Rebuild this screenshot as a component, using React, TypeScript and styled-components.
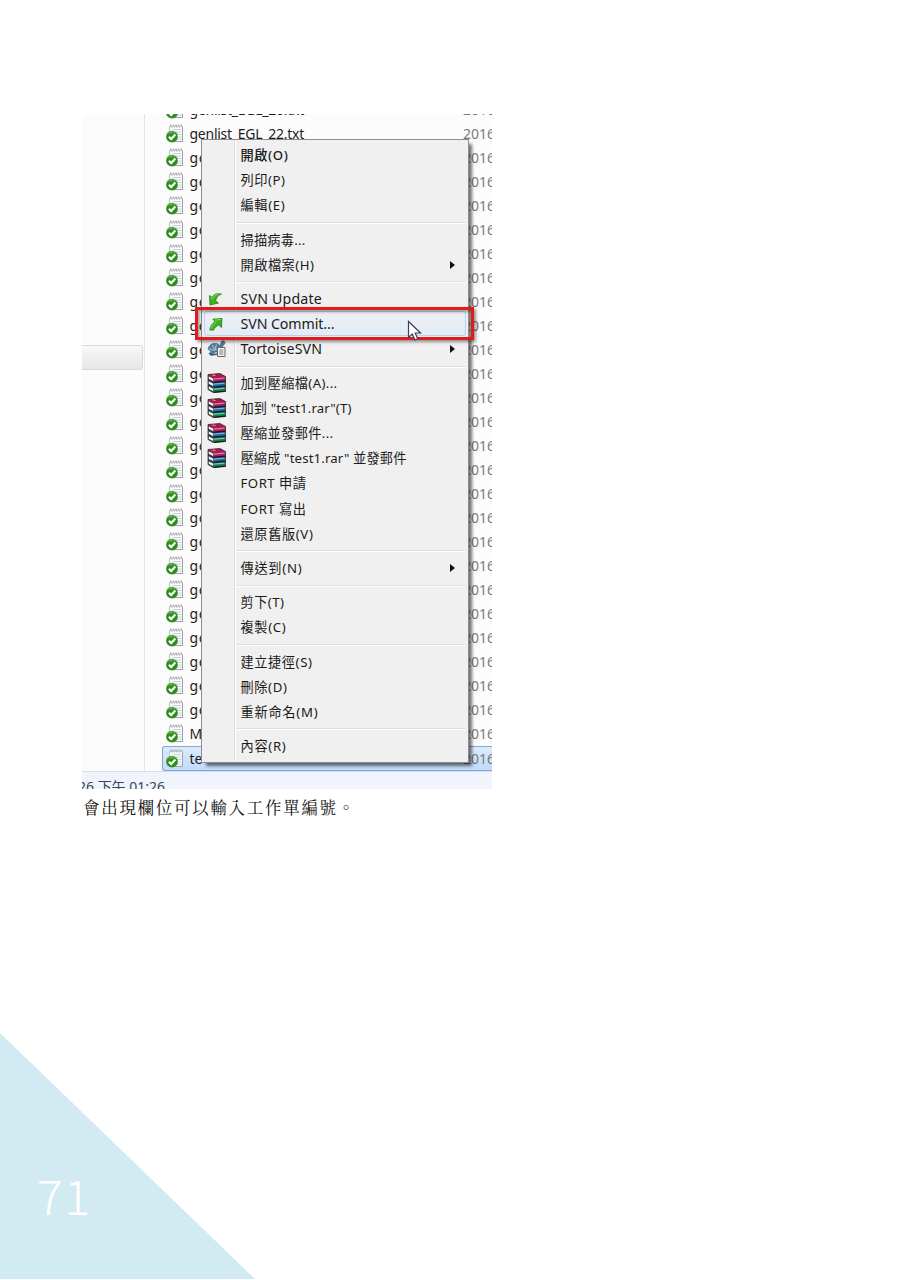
import React, { useLayoutEffect, useRef, useState } from 'react';
import styled, { createGlobalStyle, css } from 'styled-components';

const Global = createGlobalStyle`
  *, *::before, *::after { box-sizing: border-box; }
  body { margin: 0; background: #fff; }
`;

const uiFont = `"Noto Sans", "Noto Sans CJK TC", sans-serif`;

const Page = styled.main`
  width: 906px;
  height: 1280px;
  padding-top: 114px;
  display: flex;
  flex-direction: column;
  background: #fff;
  overflow: hidden;
  font-family: ${uiFont};
`;

const Figure = styled.section`
  position: relative;
  width: 410px;
  height: 675px;
  margin-left: 82px;
  flex: none;
  display: flex;
  flex-direction: column;
  overflow: hidden;
  background: #fcfcfd;
`;

const Explorer = styled.div`
  height: 657px;
  flex: none;
  display: flex;
  overflow: hidden;
`;

const Sidebar = styled.div`
  width: 63px;
  flex: none;
  padding-top: 231px;
  border-right: 1px solid #dde5f2;
`;

const SidebarItem = styled.div`
  width: 61px;
  height: 25px;
  border: 1px solid #dadada;
  border-left: 0;
  border-radius: 0 3px 3px 0;
  background: linear-gradient(#f8f8f8, #e6e6e6);
`;

const Files = styled.div`
  flex: 1;
  margin-top: -16px;
  padding-left: 17px;
`;

const FileRow = styled.div<{ $selected?: boolean }>`
  height: 24px;
  display: flex;
  align-items: center;
  padding-left: 3px;
  white-space: nowrap;
  font-size: 14px;
  line-height: 22px;
  color: #1c1c1c;
  ${(p) =>
    p.$selected &&
    css`
      height: 25px;
      padding-left: 2px;
      border: 1px solid #84a6cf;
      border-right: 0;
      border-radius: 3px 0 0 3px;
      background: linear-gradient(#dcebfc, #c1dbfc);
    `}
`;

const FileName = styled.span`
  width: 279px;
  flex: none;
  padding-left: 5.5px;
`;

const FileDate = styled.span`
  color: #7b7b7b;
`;

const StatusBar = styled.div`
  height: 18px;
  flex: none;
  border-top: 1px solid #d3dcec;
  background: #f1f4fc;
  overflow: hidden;
  padding-top: 5px;
  font-size: 14px;
  line-height: 20px;
  color: #35475f;
  white-space: nowrap;
`;

const StatusText = styled.div`
  margin-left: -4px;
`;

const Menu = styled.div`
  position: absolute;
  left: 119px;
  top: 25px;
  width: 268px;
  height: 624px;
  padding: 2.6px 2px 0;
  border: 1px solid #8d8d8d;
  background: linear-gradient(90deg, #f0f0f0 32px, #dedede 32px, #dedede 33px, #fff 33px, #fff 34px, #f0f0f0 34px);
  box-shadow: 4px 4px 3px -1px rgba(0, 0, 0, 0.55);
`;

const MenuItem = styled.div<{ $bold?: boolean; $hover?: boolean; $latin?: boolean }>`
  height: 25.05px;
  display: flex;
  align-items: center;
  font-size: ${(p) => (p.$latin ? 14.2 : 13.2)}px;
  line-height: 20px;
  font-weight: ${(p) => (p.$bold ? 500 : 400)};
  color: #1b1b1b;
  ${(p) =>
    p.$hover &&
    css`
      border-radius: 3px;
      box-shadow: inset 0 0 0 1px #b5d2f1;
      background: linear-gradient(#eef1f6, #e3ebf5);
    `}
`;

const IconSlot = styled.span`
  width: 36.5px;
  flex: none;
  display: flex;
  align-items: center;
  padding-left: 2.5px;
`;

const Label = styled.span`
  white-space: nowrap;
`;

const Arrow = styled.span`
  margin-left: auto;
  margin-right: 11px;
  border: 4px solid transparent;
  border-left: 5px solid #111;
  border-right: 0;
`;

const Separator = styled.div`
  height: 9.28px;
  display: flex;
  align-items: center;
  padding-top: 1px;
  &::after {
    content: '';
    flex: 1;
    height: 2px;
    margin-left: 32px;
    border-top: 1px solid #dfdfdf;
    border-bottom: 1px solid #fff;
  }
`;

const Highlight = styled.div`
  position: absolute;
  left: 113px;
  top: 193px;
  width: 279px;
  height: 33px;
  border: 3px solid #e01b1e;
  box-shadow: 2px 2px 3px rgba(0, 0, 0, 0.4), inset 2px 2px 3px rgba(0, 0, 0, 0.35);
`;

const Pointer = styled.svg`
  position: absolute;
  left: 325px;
  top: 206px;
`;

const Caption = styled.p`
  margin: 8px 0 0 83px;
  font-family: "Noto Serif CJK TC", "Noto Sans CJK TC", serif;
  font-size: 16.5px;
  line-height: 20px;
  color: #111;
`;

const Corner = styled.footer`
  width: 255px;
  height: 246px;
  margin-top: auto;
  margin-bottom: 1px;
  flex: none;
  padding: 126px 0 0 37px;
  background: #d2eaf1;
  clip-path: polygon(0 0, 100% 100%, 0 100%);
  font-family: "Noto Sans CJK TC", sans-serif;
  font-weight: 300;
  font-size: 48px;
  letter-spacing: 1.5px;
  line-height: 70px;
  color: #fff;
`;

/* Tracks the text so that it spans the given number of pixels. */
function Fit({ width, children }: { width: number; children: string }) {
  const ref = useRef<HTMLSpanElement>(null);
  const [spacing, setSpacing] = useState(0);
  useLayoutEffect(() => {
    const el = ref.current;
    if (el) setSpacing((width - el.getBoundingClientRect().width) / children.length);
  }, [width, children]);
  return (
    <Label ref={ref} style={{ letterSpacing: spacing }}>
      {children}
    </Label>
  );
}

const FileIcon = () => (
  <svg width="19" height="22" viewBox="0 0 19 22">
    <path d="M4.500 3h13v15.500h-13z" fill="#f9fafb" stroke="#c3c6c9" />
    <path d="M17.500 4v14.500h-9" fill="none" stroke="#9da0a4" />
    <path d="M5 4.500l1-3 1 3 1.500-3 1 3 1.500-3 1 3 1.500-3 1 3 1.500-3 1 3" fill="none" stroke="#b4b4b4" strokeWidth=".8" />
    <path d="M8 6.500h8M11 9h5M12.500 11.500h4M13.500 14h3M12.500 16.200h4" stroke="#c6d3df" />
    <circle cx="7" cy="13.700" r="5.900" fill="#2f911c" />
    <path d="M2.300 10.500a5.500 5.500 0 0 1 9-.5c-3 .3-6 .6-9 .5z" fill="#5bb044" />
    <path d="M3.900 13.700l2.300 2.300 4.200-4.500" fill="none" stroke="#fff" strokeWidth="2.100" />
  </svg>
);

const UpdateIcon = () => (
  <svg width="18" height="18" viewBox="0 0 18 18">
    <path d="M2.500 5.500l2.500 2C7 4.200 10 2.800 14.500 4.200 11.500 4.800 9.500 7 8.600 10.700l2.900 2.300-8.500 2z" fill="#39b51b" stroke="#247a13" strokeWidth=".8" />
    <path d="M3.700 7.300l1.700 1.500C7 6 9 4.700 11.500 4.400" fill="none" stroke="#86e06a" />
  </svg>
);

const CommitIcon = () => (
  <svg width="18" height="18" viewBox="0 0 18 18">
    <path d="M5.800 4.200l9.200-.7-.6 9-2.700-2.400c-2.400 1-4.200 2.400-5 5L2.800 15c.5-3.800 2.200-6.200 5.300-8.500z" fill="#39b51b" stroke="#247a13" strokeWidth=".8" />
    <path d="M8 5.100l5.800-.6M4.100 13.800c.8-3 2.500-5 5.200-6.800" fill="none" stroke="#86e06a" />
  </svg>
);

const TortoiseIcon = () => (
  <svg width="20" height="20" viewBox="0 0 20 20">
    <path d="M1 10c1-4 4-6 8-5.500 2 .2 3 1 3.600 2.500L14 4c0-2 2-3 3.500-1.500 1 1.500 0 3-1.500 4l-2 4.500-2 2H8l-3 3H3l1-3.500z" fill="#56799b" stroke="#415f7c" strokeWidth=".7" />
    <path d="M2 9.500c3 2 7 2 10 .3M5.500 6l2 4.500M9.500 5.500l-1.500 5" fill="none" stroke="#9ec2df" strokeWidth="1.100" />
    <path d="M2 14l3 2 5-1" fill="none" stroke="#385572" strokeWidth="1.500" />
    <path d="M10.500 8.500h7.500v9h-7.500z" fill="#f4f4f4" stroke="#666" />
    <path d="M12.300 11h4M12.300 13h4M12.300 15h4" stroke="#777" />
  </svg>
);

const books = [
  { y: 0, fill: '#a51c5c', light: '#e577a8' },
  { y: 5, fill: '#1b63a8', light: '#72b5e8' },
  { y: 10, fill: '#158052', light: '#6bcfa0' },
];

const RarIcon = () => (
  <svg width="20" height="20" viewBox="0 0 20 20">
    {[...books].reverse().map((b) => (
      <g key={b.y} transform={`translate(0 ${b.y})`}>
        <path d="M1 1.500l12-1 5.500 3v5l-12 1.200L1 6.500z" fill={b.fill} stroke="#2a1620" strokeWidth=".7" />
        <path d="M1.500 3l5 2.600v3L1.500 6z" fill="#fff" stroke="#333" strokeWidth=".6" />
        <path d="M6.500 6.200l11-1" stroke={b.light} strokeWidth="1.300" />
        <path d="M6.500 9.200l12-1.100" stroke="#151515" />
      </g>
    ))}
    <path d="M4.500 1.700l2.500-.3 2.200 1.200-2.300.3z" fill="#e8a32b" />
  </svg>
);

const icons = { update: UpdateIcon, commit: CommitIcon, tortoise: TortoiseIcon, rar: RarIcon };

type Item = {
  text: string;
  width: number;
  icon?: keyof typeof icons;
  bold?: boolean;
  hover?: boolean;
  submenu?: boolean;
  latin?: boolean;
};

const groups: Item[][] = [
  [
    { text: '開啟(O)', width: 48, bold: true },
    { text: '列印(P)', width: 45 },
    { text: '編輯(E)', width: 45 },
  ],
  [
    { text: '掃描病毒...', width: 65 },
    { text: '開啟檔案(H)', width: 74, submenu: true },
  ],
  [
    { text: 'SVN Update', width: 81.5, icon: 'update', latin: true },
    { text: 'SVN Commit...', width: 94, icon: 'commit', hover: true, latin: true },
    { text: 'TortoiseSVN', width: 81.5, icon: 'tortoise', submenu: true, latin: true },
  ],
  [
    { text: '加到壓縮檔(A)...', width: 97, icon: 'rar' },
    { text: '加到 "test1.rar"(T)', width: 111, icon: 'rar' },
    { text: '壓縮並發郵件...', width: 93, icon: 'rar' },
    { text: '壓縮成 "test1.rar" 並發郵件', width: 166, icon: 'rar' },
    { text: 'FORT 申請', width: 66 },
    { text: 'FORT 寫出', width: 66 },
    { text: '還原舊版(V)', width: 73 },
  ],
  [{ text: '傳送到(N)', width: 62, submenu: true }],
  [
    { text: '剪下(T)', width: 44 },
    { text: '複製(C)', width: 46 },
  ],
  [
    { text: '建立捷徑(S)', width: 72 },
    { text: '刪除(D)', width: 47 },
    { text: '重新命名(M)', width: 78 },
  ],
  [{ text: '內容(R)', width: 46 }],
];

const files = [
  { name: 'genlist_EGL_20.txt', width: 114.5 },
  { name: 'genlist_EGL_22.txt', width: 114.5 },
  ...Array.from({ length: 24 }, () => ({ name: 'ge', width: 18 })),
  { name: 'M', width: 13 },
  { name: 'te', width: 13 },
];

export default function App() {
  return (
    <>
      <Global />
      <Page>
        <Figure>
          <Explorer>
            <Sidebar>
              <SidebarItem />
            </Sidebar>
            <Files>
              {files.map((f, i) => (
                <FileRow key={i} $selected={i === files.length - 1}>
                  <FileIcon />
                  <FileName>
                    <Fit width={f.width}>{f.name}</Fit>
                  </FileName>
                  <FileDate>2016</FileDate>
                </FileRow>
              ))}
            </Files>
          </Explorer>
          <StatusBar>
            <StatusText>
              <Fit width={87}>26 下午 01:26</Fit>
            </StatusText>
          </StatusBar>
          <Menu>
            {groups.map((group, g) => (
              <React.Fragment key={g}>
                {g > 0 && <Separator />}
                {group.map((item) => {
                  const Icon = item.icon && icons[item.icon];
                  return (
                    <MenuItem key={item.text} $bold={item.bold} $hover={item.hover} $latin={item.latin}>
                      <IconSlot>{Icon && <Icon />}</IconSlot>
                      <Fit width={item.width}>{item.text}</Fit>
                      {item.submenu && <Arrow />}
                    </MenuItem>
                  );
                })}
              </React.Fragment>
            ))}
          </Menu>
          <Highlight />
          <Pointer width="16" height="24" viewBox="0 0 16 24">
            <path d="M1.500 1.500v16l3.800-3.500 2.600 6 2.800-1.200-2.500-5.800h5.300z" fill="#fff" stroke="#3c3f55" strokeWidth="1.200" />
          </Pointer>
        </Figure>
        <Caption>
          <Fit width={273}>會出現欄位可以輸入工作單編號。</Fit>
        </Caption>
        <Corner>71</Corner>
      </Page>
    </>
  );
}
